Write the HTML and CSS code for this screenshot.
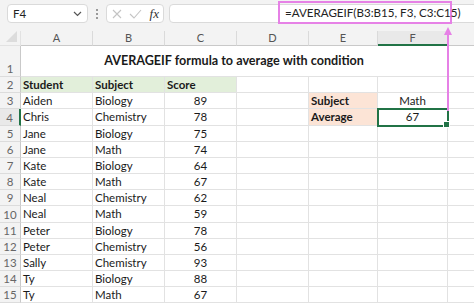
FILE: index.html
```html
<!DOCTYPE html>
<html lang="en">
<head>
  <meta charset="UTF-8" />
  <title>AVERAGEIF formula</title>
  <link rel="stylesheet" href="styles.css">
</head>
<body>
  <div class="toolbar">
    <div class="namebox">
      <span>F4</span>
      <svg width="9" height="6" viewBox="0 0 9 6"><path d="M1 1 L4.5 4.5 L8 1" fill="none" stroke="#555" stroke-width="1.2"/></svg>
    </div>
    <div class="grip"><i></i><i></i><i></i></div>
    <div class="fnbox">
      <svg width="10" height="10" viewBox="0 0 10 10"><path d="M1 1 L9 9 M9 1 L1 9" stroke="#c4c4c4" stroke-width="1.1"/></svg>
      <svg width="13" height="10" viewBox="0 0 13 10"><path d="M1 5 L5 9 L12 1" fill="none" stroke="#c4c4c4" stroke-width="1.1"/></svg>
      <span class="fx">fx</span>
    </div>
    <div class="formula-bar"></div>
  </div>

  <div class="formula-hl">=AVERAGEIF(B3:B15, F3, C3:C15)</div>
  <svg class="arrow" width="14" height="86" viewBox="0 0 14 86">
    <polygon points="7,2 3,10 11,10" fill="#e681e6"/>
    <line x1="7" y1="8" x2="7" y2="86" stroke="#e681e6" stroke-width="2"/>
  </svg>

  <div class="sheet">
    <div class="corner"><span></span></div><div class="ch">A</div><div class="ch">B</div><div class="ch">C</div><div class="ch">D</div><div class="ch">E</div><div class="ch sel">F</div><div class="ch"></div>

    <div class="rh">1</div><div class="c title">AVERAGEIF formula to average with condition</div><div class="c"></div>

    <div class="rh">2</div><div class="c hd">Student</div><div class="c hd">Subject</div><div class="c hd">Score</div><div class="c"></div><div class="c"></div><div class="c"></div><div class="c"></div>
    <div class="rh">3</div><div class="c">Aiden</div><div class="c">Biology</div><div class="c num">89</div><div class="c"></div><div class="c lbl">Subject</div><div class="c num">Math</div><div class="c"></div>
    <div class="rh sel">4</div><div class="c">Chris</div><div class="c">Chemistry</div><div class="c num">78</div><div class="c"></div><div class="c lbl">Average</div><div class="c num active">67</div><div class="c"></div>
    <div class="rh">5</div><div class="c">Jane</div><div class="c">Biology</div><div class="c num">75</div><div class="c"></div><div class="c"></div><div class="c"></div><div class="c"></div>
    <div class="rh">6</div><div class="c">Jane</div><div class="c">Math</div><div class="c num">74</div><div class="c"></div><div class="c"></div><div class="c"></div><div class="c"></div>
    <div class="rh">7</div><div class="c">Kate</div><div class="c">Biology</div><div class="c num">64</div><div class="c"></div><div class="c"></div><div class="c"></div><div class="c"></div>
    <div class="rh">8</div><div class="c">Kate</div><div class="c">Math</div><div class="c num">67</div><div class="c"></div><div class="c"></div><div class="c"></div><div class="c"></div>
    <div class="rh">9</div><div class="c">Neal</div><div class="c">Chemistry</div><div class="c num">62</div><div class="c"></div><div class="c"></div><div class="c"></div><div class="c"></div>
    <div class="rh">10</div><div class="c">Neal</div><div class="c">Math</div><div class="c num">59</div><div class="c"></div><div class="c"></div><div class="c"></div><div class="c"></div>
    <div class="rh">11</div><div class="c">Peter</div><div class="c">Biology</div><div class="c num">78</div><div class="c"></div><div class="c"></div><div class="c"></div><div class="c"></div>
    <div class="rh">12</div><div class="c">Peter</div><div class="c">Chemistry</div><div class="c num">56</div><div class="c"></div><div class="c"></div><div class="c"></div><div class="c"></div>
    <div class="rh">13</div><div class="c">Sally</div><div class="c">Chemistry</div><div class="c num">93</div><div class="c"></div><div class="c"></div><div class="c"></div><div class="c"></div>
    <div class="rh">14</div><div class="c">Ty</div><div class="c">Biology</div><div class="c num">88</div><div class="c"></div><div class="c"></div><div class="c"></div><div class="c"></div>
    <div class="rh">15</div><div class="c">Ty</div><div class="c">Math</div><div class="c num">67</div><div class="c"></div><div class="c"></div><div class="c"></div><div class="c"></div>
  </div>
</body>
</html>
```

FILE: styles.css
```css
:root {
  --grid: #e2e2e2;
  --head-bg: #f3f3f3;
  --excel-green: #217346;
  --pink: #e681e6;
}

* {
  box-sizing: border-box;
}

body {
  margin: 0;
  width: 474px;
  height: 304px;
  overflow: hidden;
  position: relative;
  background: #fff;
  font-family: Lato, 'Open Sans', sans-serif;
  color: #1a1a1a;
}

/* formula bar strip */
.toolbar {
  height: 31px;
  background: var(--head-bg);
  display: flex;
  align-items: flex-start;
  padding: 4px 0 0 7px;
}

.namebox, .fnbox, .formula-bar {
  height: 19px;
  background: #fff;
  border: 1px solid #dadada;
  border-radius: 4px;
  display: flex;
  align-items: center;
}

.namebox {
  width: 81px;
  justify-content: space-between;
  padding: 0 5px 0 5px;
  font-size: 11.5px;
  color: #222;
}

.grip {
  width: 18px;
  height: 19px;
  display: flex;
  flex-direction: column;
  align-items: center;
  justify-content: center;
  gap: 2px;
}

.grip i {
  width: 2px;
  height: 2px;
  background: #9a9a9a;
}

.fnbox {
  width: 58px;
  padding: 0 4px 0 5px;
  justify-content: space-between;
}

.fx {
  font-family: 'Liberation Serif', serif;
  font-style: italic;
  font-size: 13px;
  color: #333;
}

.formula-bar {
  flex: 1;
  margin-left: 5px;
  margin-right: -4px;
}

/* annotation */
.formula-hl {
  position: absolute;
  left: 278px;
  top: 1px;
  width: 174px;
  height: 23px;
  border: 2px solid var(--pink);
  padding-left: 5px;
  font-size: 11.6px;
  line-height: 19px;
  color: #222;
  white-space: nowrap;
}

.arrow {
  position: absolute;
  left: 441px;
  top: 25px;
  z-index: 3;
}

/* the grid */
.sheet {
  display: grid;
  grid-template-columns: 21px 72px 72px 72px 72px 69px 70px 40px;
  grid-template-rows: 15px 31px repeat(14, 16.18px);
  font-size: 11.5px;
}

.sheet > div {
  border-right: 1px solid var(--grid);
  border-bottom: 1px solid var(--grid);
  white-space: nowrap;
  overflow: hidden;
}

.corner {
  background: var(--head-bg);
  position: relative;
}

.corner span {
  position: absolute;
  right: 3px;
  bottom: 3px;
  width: 0;
  height: 0;
  border-left: 11px solid transparent;
  border-bottom: 11px solid #dcdcdc;
}

.ch {
  background: var(--head-bg);
  color: #555;
  font-size: 11px;
  text-align: center;
  line-height: 14px;
  border-right-color: #dadada !important;
  border-bottom-color: #c9c9c9 !important;
}

.ch.sel {
  background: #e9e9e9;
  border-bottom: 2px solid var(--excel-green) !important;
}

.rh {
  background: var(--head-bg);
  color: #666;
  text-align: center;
  display: flex;
  align-items: flex-end;
  justify-content: center;
  padding-bottom: 1px;
  font-size: 11.5px;
  border-right-color: #c9c9c9 !important;
  border-bottom-color: #dcdcdc !important;
}

.rh.sel {
  background: #e9e9e9;
  border-right: 2px solid var(--excel-green) !important;
}

.c {
  padding: 0 2px;
  line-height: 15px;
}

.sheet > .c:nth-child(8n + 4) {
  border-right-color: #cfcfcf;
}

.title {
  grid-column: span 6;
  text-align: center;
  font-weight: bold;
  font-size: 12.6px;
  line-height: 30px;
}

.hd {
  background: #e2efda;
  font-weight: bold;
}

.lbl {
  background: #fce4d6;
  font-weight: bold;
}

.num {
  text-align: center;
}

.active {
  position: relative;
  outline: 2px solid var(--excel-green);
  outline-offset: -1px;
  overflow: visible !important;
  z-index: 2;
}

.active::after {
  content: "";
  position: absolute;
  right: -3px;
  bottom: -3px;
  width: 5px;
  height: 5px;
  background: var(--excel-green);
  border: 1px solid #fff;
}
```
